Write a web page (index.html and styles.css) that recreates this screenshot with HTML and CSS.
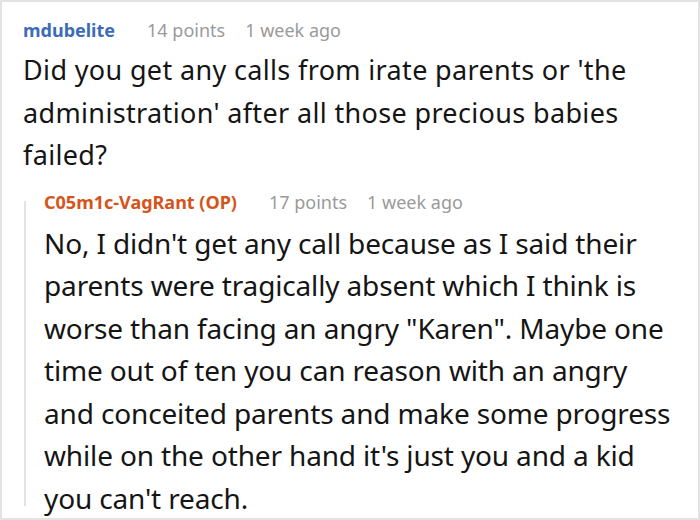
FILE: index.html
```html
<!DOCTYPE html>
<html>
<head>
<meta charset="utf-8">
<link rel="stylesheet" href="styles.css">
</head>
<body>
<div class="frame">
  <div class="comment">
    <div class="meta">
      <span class="user">mdubelite</span>
      <span class="info">14 points</span>
      <span class="info">1 week ago</span>
    </div>
    <p class="body">Did you get any calls from irate parents or 'the administration' after all those precious babies failed?</p>
    <div class="reply">
      <div class="meta">
        <span class="user op">C05m1c-VagRant (OP)</span>
        <span class="info">17 points</span>
        <span class="info">1 week ago</span>
      </div>
      <p class="body condensed">No, I didn't get any call because as I said their parents were tragically absent which I think is worse than facing an angry "Karen". Maybe one time out of ten you can reason with an angry<br>and conceited parents and make some progress while on the other hand it's just you and a kid<br>you can't reach.</p>
    </div>
  </div>
</div>
</body>
</html>
```

FILE: styles.css
```css
html, body {
  margin: 0;
  padding: 0;
  background: #fff;
}
.frame {
  box-sizing: border-box;
  width: 700px;
  height: 520px;
  border: 2px solid #e3e3e3;
  overflow: hidden;
  font-family: "Noto Sans", "Open Sans", sans-serif;
}
.comment {
  padding: 16px 0 0 21px;
}
.meta {
  display: flex;
  gap: 20px;
  font-size: 18px;
  line-height: 24px;
}
.user {
  font-weight: bold;
  color: #3b6cb7;
  margin-right: 12px;
}
.user.op {
  color: #d4541c;
}
.info {
  color: #9a9a9a;
}
.body {
  margin: 7px 0 0;
  font-size: 27px;
  letter-spacing: 0.35px;
  line-height: 42.5px;
  color: #151515;
  width: 650px;
}
.reply {
  position: relative;
  margin: 13px 0 0 1px;
  padding-left: 20px;
}
.reply::before {
  content: "";
  position: absolute;
  left: 0;
  top: 11px;
  bottom: 13px;
  width: 2px;
  background: #e3e3e3;
}
.body.condensed {
  margin-top: 8px;
  font-size: 28px;
  letter-spacing: -0.15px;
  width: 640px;
}
```
